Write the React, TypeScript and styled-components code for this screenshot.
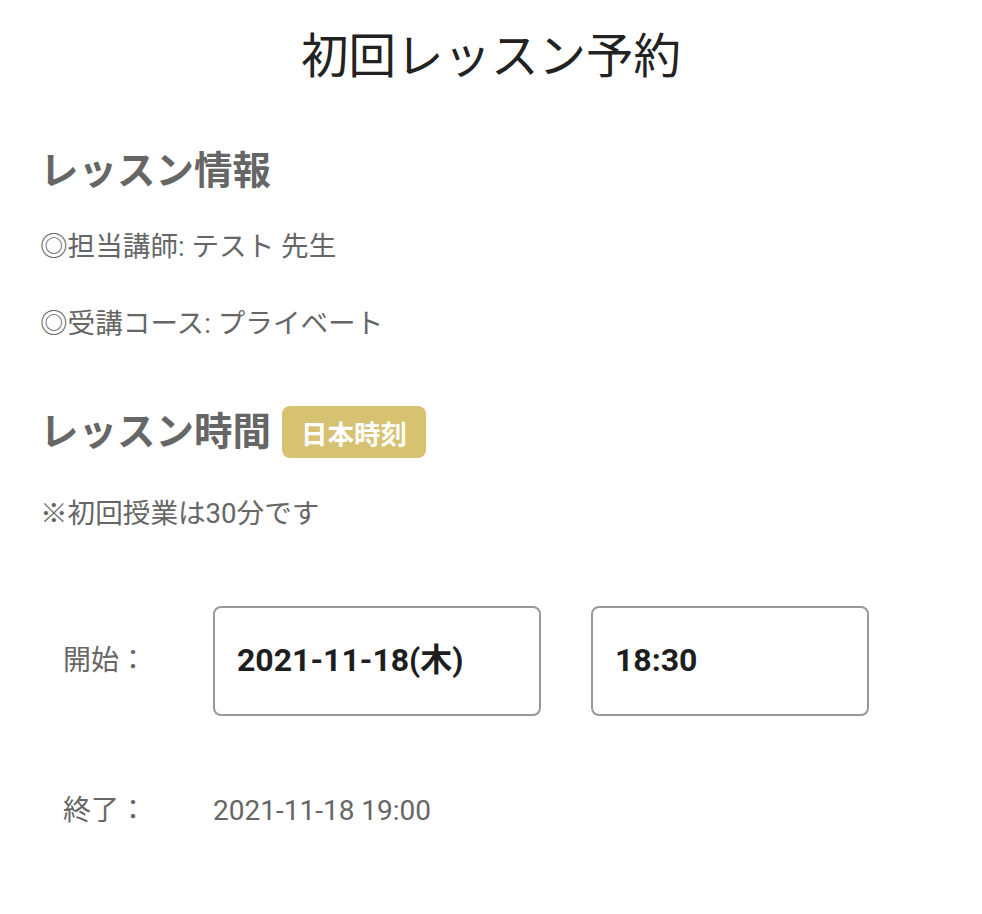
import React from 'react'
import styled, { createGlobalStyle } from 'styled-components'

const GlobalStyle = createGlobalStyle`
  body {
    margin: 0;
    background: #fff;
    font-family: Roboto, "Noto Sans CJK JP", sans-serif;
  }
`

const Page = styled.div`
  width: 982px;
  padding: 27px 40px 40px;
  box-sizing: border-box;
  display: flex;
  flex-direction: column;
`

const Title = styled.h1`
  margin: 0;
  text-align: center;
  font-size: 47.5px;
  font-weight: 400;
  line-height: 60px;
  color: #222;
`

const SectionHeading = styled.div<{ $top: number }>`
  display: flex;
  align-items: center;
  gap: 11px;
  margin-top: ${({ $top }) => $top}px;
  height: 52px;
  h2 {
    margin: 0;
    font-size: 38.5px;
    font-weight: 700;
    line-height: 52px;
    color: #666;
  }
`

const Badge = styled.span`
  display: inline-flex;
  align-items: center;
  justify-content: center;
  height: 52px;
  width: 144px;
  border-radius: 8px;
  background: #d7c271;
  color: #fff;
  font-size: 26.5px;
  font-weight: 700;
`

const InfoLine = styled.p<{ $top: number }>`
  margin: ${({ $top }) => $top}px 0 0;
  font-size: 27.6px;
  line-height: 40px;
  color: #666;
`

const TimeRow = styled.div<{ $top: number }>`
  display: flex;
  align-items: center;
  margin-top: ${({ $top }) => $top}px;
  padding-left: 23px;
`

const RowLabel = styled.span`
  width: 150px;
  flex-shrink: 0;
  font-size: 28px;
  line-height: 40px;
  color: #666;
`

const PickerBox = styled.div<{ $width: number }>`
  width: ${({ $width }) => $width}px;
  height: 110px;
  box-sizing: border-box;
  border: 2px solid #999;
  border-radius: 8px;
  display: flex;
  align-items: center;
  padding: 0 0 2px 22px;
  font-size: 32px;
  font-weight: 700;
  line-height: 1;
  color: #1e1e1e;
  & + & {
    margin-left: 50px;
  }
`

const EndValue = styled.span`
  font-size: 28px;
  line-height: 40px;
  color: #666;
`

export default function App() {
  return (
    <>
      <GlobalStyle />
      <Page>
        <Title>初回レッスン予約</Title>

        <SectionHeading $top={58}>
          <h2>レッスン情報</h2>
        </SectionHeading>
        <InfoLine $top={30}>◎担当講師: テスト 先生</InfoLine>
        <InfoLine $top={37}>◎受講コース: プライベート</InfoLine>

        <SectionHeading $top={62}>
          <h2>レッスン時間</h2>
          <Badge>日本時刻</Badge>
        </SectionHeading>
        <InfoLine $top={36}>※初回授業は30分です</InfoLine>

        <TimeRow $top={72}>
          <RowLabel>開始：</RowLabel>
          <PickerBox $width={328}>2021-11-18(木)</PickerBox>
          <PickerBox $width={278}>18:30</PickerBox>
        </TimeRow>

        <TimeRow $top={75}>
          <RowLabel>終了：</RowLabel>
          <EndValue>2021-11-18 19:00</EndValue>
        </TimeRow>
      </Page>
    </>
  )
}
